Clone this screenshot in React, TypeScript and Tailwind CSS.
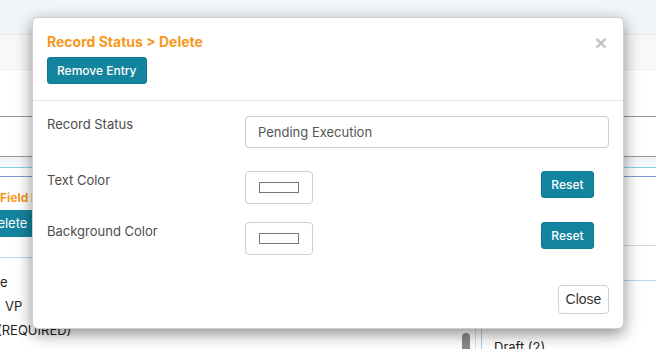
export default function App() {
  return (
    <div className="relative h-[349px] w-[656px] overflow-hidden bg-white font-['Inter',sans-serif]">
      {/* Page behind the modal */}
      <div className="h-[35px] border-b border-[#dde8f1] bg-[#f3f6f9]" />
      <div className="h-[35px] border-b border-[#ebebeb] bg-[#f8f8f8]" />
      <div className="h-[47px] border-b border-[#999]" />
      <div className="h-[40px] border-b border-[#9a9a9a]" />
      <div className="h-[5px] bg-[#eef4f8]" />
      <div className="h-[6px] border-b border-[#86d3dc] bg-[#f4f8fb]" />
      <div className="h-[9px] border-b border-[#7d97d2]" />

      <div className="flex">
        <div className="w-[460px]">
          <div className="mt-[12px] text-[12px] font-bold text-[#f7981d]">Field Data</div>
          <div className="mt-[3px] flex">
            <div className="-ml-[24px] flex h-[27px] items-center rounded-[3px] bg-[#13849e] px-3 text-[13px] text-white">
              Delete
            </div>
          </div>
          <div className="mt-[20px] w-[40px] border-b border-[#bcd7e6]" />
          <div className="mt-[12px] text-[13px] leading-[24px] text-[#222]">
            <div>e</div>
            <div className="ml-[5px]">VP</div>
            <div className="-ml-[3px]">(REQUIRED)</div>
          </div>
        </div>
        <div className="flex flex-1">
          <div className="ml-[2px] mt-[156px] h-[30px] w-[8px] rounded-full bg-[#8a8a8a]" />
          <div className="ml-[5px] w-[6px] border-l border-[#dcdcdc]" />
          <div className="flex-1 border-l border-[#a9cfe4]">
            <div className="mt-[68px] border-b border-[#d8d8d8]" />
            <div className="mt-[34px] border-b border-[#b6d8ea]" />
            <div className="ml-[12px] mt-[57px] text-[13px] text-[#222]">Draft (2)</div>
          </div>
        </div>
      </div>

      {/* Modal */}
      <div className="absolute left-[32px] top-[17px] h-[312px] w-[592px] rounded-[6px] border border-[#cfcfcf] bg-white shadow-[0_5px_16px_rgba(0,0,0,0.45)]">
        <div className="relative border-b border-[#e5e5e5] px-[14px] pb-[16px] pt-[14px]">
          <div className="text-[14px] font-bold leading-[20px] text-[#f7981d]">Record Status &gt; Delete</div>
          <button className="mt-[5px] h-[27px] rounded-[3px] border border-[#0f7a93] bg-[#13849e] px-[9px] text-[12px] font-medium text-white">
            Remove Entry
          </button>
          <span className="absolute right-[16px] top-[13px] font-['Liberation_Sans',sans-serif] text-[21px] font-bold leading-[24px] text-[#c4c4c4]">
            ×
          </span>
        </div>

        <div className="px-[14px] pt-[15px]">
          <div className="flex">
            <div className="w-[198px] text-[13px] leading-[16px] text-[#4d4d4d]">Record Status</div>
            <div className="flex h-[32px] flex-1 items-center rounded-[4px] border border-[#cdcdcd] pl-[12px] pt-[1px] text-[13px] text-[#555]">
              Pending Execution
            </div>
          </div>

          <div className="mt-[23px] flex">
            <div className="w-[198px] pt-[1px] text-[13px] leading-[16px] text-[#4d4d4d]">Text Color</div>
            <div className="flex flex-1 items-start justify-between pr-[15px]">
              <div className="h-[33px] w-[68px] rounded-[4px] border border-[#d0d0d0] pl-[13px] pt-[10px]">
                <div className="h-[11px] w-[40px] border border-[#777]" />
              </div>
              <button className="h-[27px] w-[53px] rounded-[3px] border border-[#0f7a93] bg-[#13849e] text-[12px] font-medium text-white">
                Reset
              </button>
            </div>
          </div>

          <div className="mt-[18px] flex">
            <div className="w-[198px] pt-[1px] text-[13px] leading-[16px] text-[#4d4d4d]">Background Color</div>
            <div className="flex flex-1 items-start justify-between pr-[15px]">
              <div className="h-[33px] w-[68px] rounded-[4px] border border-[#d0d0d0] pl-[13px] pt-[10px]">
                <div className="h-[11px] w-[40px] border border-[#777]" />
              </div>
              <button className="h-[27px] w-[53px] rounded-[3px] border border-[#0f7a93] bg-[#13849e] text-[12px] font-medium text-white">
                Reset
              </button>
            </div>
          </div>

          <div className="mt-[30px] flex justify-end">
            <button className="h-[29px] w-[51px] rounded-[4px] border border-[#d0d0d0] bg-white font-['Liberation_Sans',sans-serif] text-[14px] text-[#333]">
              Close
            </button>
          </div>
        </div>
      </div>
    </div>
  )
}
